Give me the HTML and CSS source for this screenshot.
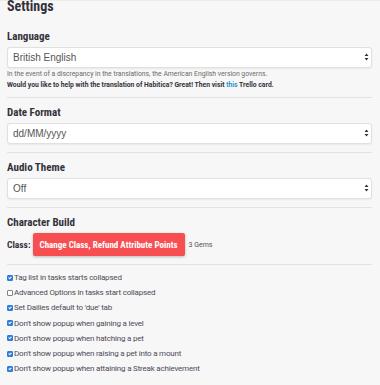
FILE: index.html
```html
<!DOCTYPE html>
<html lang="en">
<head>
    <meta charset="UTF-8">
    <meta name="viewport" content="width=device-width, initial-scale=1.0">
    <title>Settings</title>
    <link rel="stylesheet" href="styles.css">
</head>
<body>
    <div class="container">
        <h1>Settings</h1>

        <div class="section section-first">
            <h2>Language</h2>
            <div class="select-wrap">
                <select>
                    <option>British English</option>
                </select>
                <svg class="arrows" width="5" height="8" viewBox="0 0 5 8"><path d="M2.5 0.5 L4.5 3 L0.5 3 Z M2.5 7.5 L4.5 5 L0.5 5 Z" fill="#333"/></svg>
            </div>
            <p class="note">In the event of a discrepancy in the translations, the American English version governs.</p>
            <p class="note note-bold">Would you like to help with the translation of Habitica? Great! Then visit <a href="#">this</a> Trello card.</p>
        </div>

        <div class="section">
            <h2>Date Format</h2>
            <div class="select-wrap">
                <select>
                    <option>dd/MM/yyyy</option>
                </select>
                <svg class="arrows" width="5" height="8" viewBox="0 0 5 8"><path d="M2.5 0.5 L4.5 3 L0.5 3 Z M2.5 7.5 L4.5 5 L0.5 5 Z" fill="#333"/></svg>
            </div>
        </div>

        <div class="section">
            <h2>Audio Theme</h2>
            <div class="select-wrap">
                <select>
                    <option>Off</option>
                </select>
                <svg class="arrows" width="5" height="8" viewBox="0 0 5 8"><path d="M2.5 0.5 L4.5 3 L0.5 3 Z M2.5 7.5 L4.5 5 L0.5 5 Z" fill="#333"/></svg>
            </div>
        </div>

        <div class="section">
            <h2>Character Build</h2>
            <div class="class-row">
                <strong>Class:</strong>
                <button class="btn-red">Change Class, Refund Attribute Points</button>
                <span class="gems">3 Gems</span>
            </div>
        </div>

        <div class="options">
            <label><input type="checkbox" checked>Tag list in tasks starts collapsed</label>
            <label><input type="checkbox">Advanced Options in tasks start collapsed</label>
            <label><input type="checkbox" checked>Set Dailies default to 'due' tab</label>
            <label><input type="checkbox" checked>Don't show popup when gaining a level</label>
            <label><input type="checkbox" checked>Don't show popup when hatching a pet</label>
            <label><input type="checkbox" checked>Don't show popup when raising a pet into a mount</label>
            <label><input type="checkbox" checked>Don't show popup when attaining a Streak achievement</label>
        </div>
    </div>
</body>
</html>
```

FILE: styles.css
```css
body {
    margin: 0;
    padding: 0;
    background-color: #f7f7f7;
    font-family: 'Roboto', sans-serif;
    color: #34313a;
}
.container {
    padding: 0 8px 0 7px;
    border-top: 1px solid #ececec;
}
h1, h2, .class-row strong, .btn-red {
    font-family: 'Roboto Condensed', 'Liberation Sans Narrow', 'DejaVu Sans Condensed', 'Roboto', sans-serif;
}
h1 {
    margin: -3px 0 0 0;
    font-size: 14px;
    line-height: 17px;
    font-weight: 700;
}
h2 {
    margin: 0 0 3px 0;
    font-size: 11px;
    line-height: 14px;
    font-weight: 700;
}
.section {
    padding: 8px 0 8px 0;
    border-bottom: 1px solid #e2e2e2;
}
.section-first {
    padding-top: 15px;
    padding-bottom: 6px;
}
.select-wrap {
    position: relative;
}
select {
    display: block;
    width: 100%;
    height: 21px;
    padding: 0 5px;
    appearance: none;
    -webkit-appearance: none;
    background: #fff;
    border: 1px solid #e0e0e0;
    border-radius: 3px;
    box-shadow: 0 1px 2px rgba(0, 0, 0, 0.06);
    font-family: 'Liberation Sans', Arial, sans-serif;
    font-size: 10px;
    color: #555;
}
.arrows {
    position: absolute;
    right: 3px;
    top: 6px;
}
.section-first .select-wrap {
    margin-bottom: 1px;
}
.note {
    margin: 0;
    font-size: 6.8px;
    line-height: 11px;
    color: #6a6a6a;
}
.note-bold {
    font-weight: 700;
    color: #34313a;
}
.note a {
    color: #2995cd;
    text-decoration: none;
}
.class-row {
    display: flex;
    align-items: center;
    gap: 2px;
}
.class-row strong {
    font-size: 9.5px;
}
.btn-red {
    height: 23px;
    width: 152px;
    padding: 0;
    background-color: #f74e52;
    color: #fff;
    border: none;
    border-radius: 2px;
    box-shadow: 0 1px 3px rgba(0, 0, 0, 0.25);
    font-size: 9px;
    font-weight: 700;
    white-space: nowrap;
}
.gems {
    font-size: 7px;
    color: #555;
    margin-left: 2px;
}
.options {
    padding-top: 5px;
}
.options label {
    display: flex;
    align-items: center;
    height: 15.2px;
    font-size: 8px;
    letter-spacing: -0.2px;
    color: #4e4a57;
}
.options input {
    appearance: none;
    -webkit-appearance: none;
    display: grid;
    place-content: center;
    box-sizing: border-box;
    width: 6px;
    height: 6px;
    margin: 0 1px 0 0;
    border: 1px solid #858585;
    border-radius: 1px;
    background: #fff;
}
.options input:checked {
    background: #2f7dd8;
    border-color: #2f7dd8;
}
.options input:checked::after {
    content: "";
    width: 1px;
    height: 2px;
    margin-top: -1px;
    border-right: 1px solid #fff;
    border-bottom: 1px solid #fff;
    transform: rotate(45deg);
}
```
